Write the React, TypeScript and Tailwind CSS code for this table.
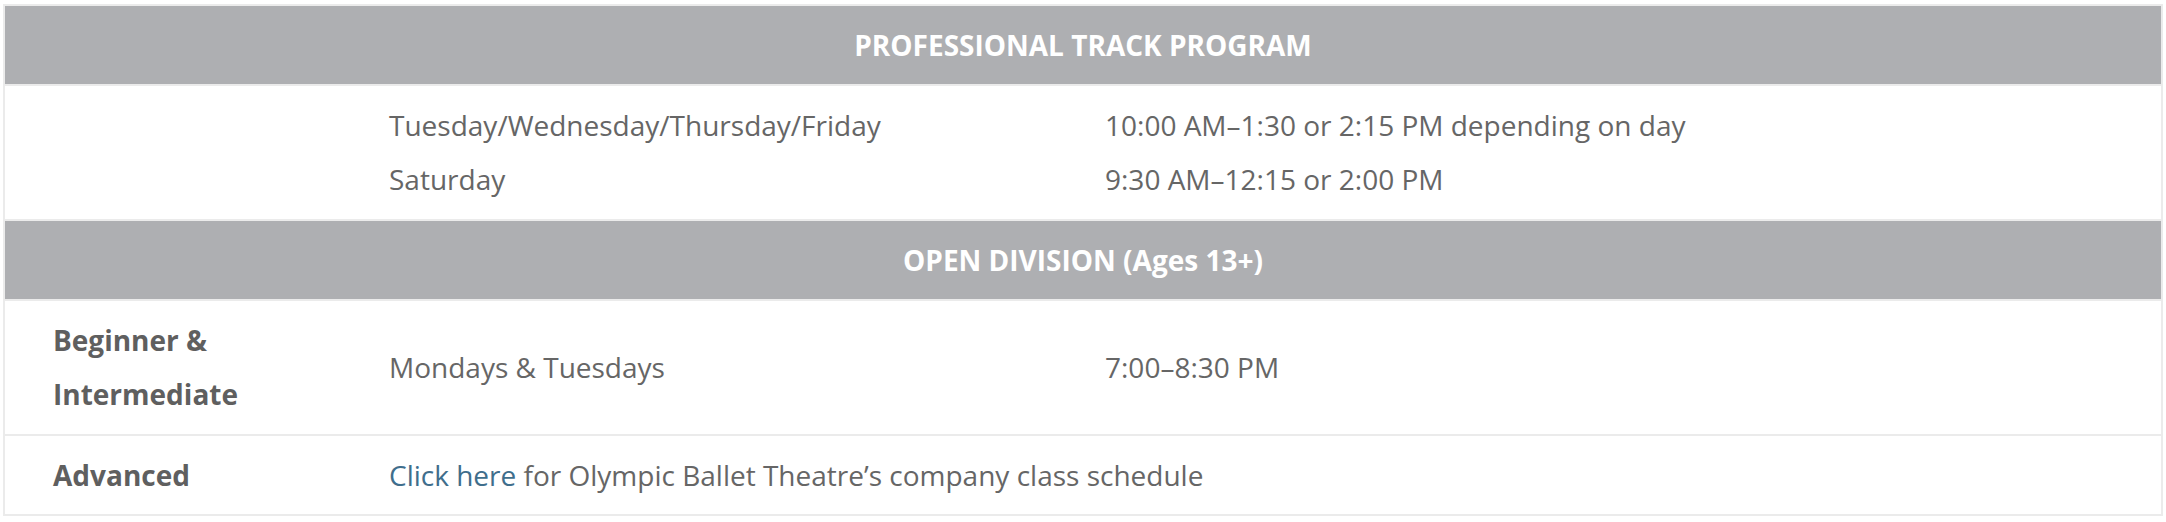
import React from 'react';

const HeaderRow = ({ title }: { title: string }) => (
  <div className="border border-[#ebebeb] bg-[#aeafb2] py-[12px] text-center text-[28px] font-bold leading-[54px] text-white">
    {title}
  </div>
);

const App: React.FC = () => {
  return (
    <div className="min-h-screen bg-white pt-[4px] pl-[3px] pr-[3px] font-['Open_Sans',sans-serif] text-[28px] text-[#666666]">
      <div className="flex flex-col border border-[#ebebeb]">
        {/* Professional track */}
        <HeaderRow title="PROFESSIONAL TRACK PROGRAM" />
        <div className="grid grid-cols-[336px_716px_1fr] items-center border border-[#ebebeb] pt-[12px] pb-[13px] leading-[54px]">
          <div className="pl-[48px]"></div>
          <div className="pl-[48px]">
            <div>Tuesday/Wednesday/Thursday/Friday</div>
            <div>Saturday</div>
          </div>
          <div className="pl-[48px]">
            <div>10:00 AM–1:30 or 2:15 PM depending on day</div>
            <div>9:30 AM–12:15 or 2:00 PM</div>
          </div>
        </div>

        {/* Open division */}
        <HeaderRow title="OPEN DIVISION (Ages 13+)" />
        <div className="grid grid-cols-[336px_716px_1fr] items-center border border-[#ebebeb] pt-[12px] pb-[13px] leading-[54px]">
          <div className="pl-[48px] pr-[24px] font-bold text-[#5f5f5f]">Beginner &amp; Intermediate</div>
          <div className="pl-[48px]">Mondays &amp; Tuesdays</div>
          <div className="pl-[48px]">7:00–8:30 PM</div>
        </div>
        <div className="grid grid-cols-[336px_1fr] items-center border border-[#ebebeb] py-[12px] leading-[54px]">
          <div className="pl-[48px] font-bold text-[#5f5f5f]">Advanced</div>
          <div className="pl-[48px]">
            <a href="#" className="text-[#3f6e8c]">Click here</a> for Olympic Ballet Theatre’s company class schedule
          </div>
        </div>
      </div>
    </div>
  );
};

export default App;
